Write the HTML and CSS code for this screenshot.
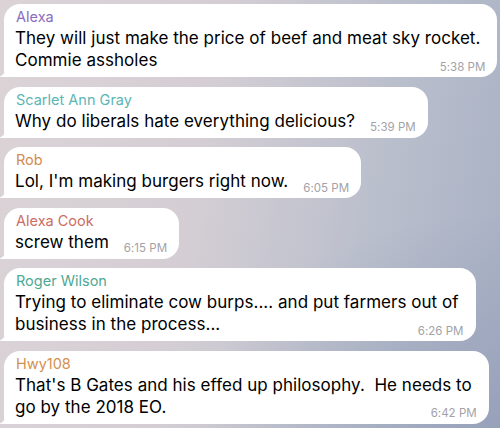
FILE: index.html
```html
<!DOCTYPE html>
<html>
<head>
<meta charset="utf-8">
<link rel="stylesheet" href="styles.css">
</head>
<body>
<div class="chat">
  <div class="bubble multi">
    <div class="name c-purple">Alexa</div>
    <div class="text">They will just make the price of beef and meat sky rocket.<br>Commie assholes<span class="time">5:38 PM</span></div>
    <svg class="tail" viewBox="0 0 14 14" width="14" height="14"><path d="M6 0 V7 C6 10 4 12.5 0 14 H14 V0 Z"/></svg>
  </div>
  <div class="bubble">
    <div class="name c-teal">Scarlet Ann Gray</div>
    <div class="text">Why do liberals hate everything delicious?<span class="time">5:39 PM</span></div>
    <svg class="tail" viewBox="0 0 14 14" width="14" height="14"><path d="M6 0 V7 C6 10 4 12.5 0 14 H14 V0 Z"/></svg>
  </div>
  <div class="bubble">
    <div class="name c-orange">Rob</div>
    <div class="text">Lol, I'm making burgers right now.<span class="time">6:05 PM</span></div>
    <svg class="tail" viewBox="0 0 14 14" width="14" height="14"><path d="M6 0 V7 C6 10 4 12.5 0 14 H14 V0 Z"/></svg>
  </div>
  <div class="bubble">
    <div class="name c-red">Alexa Cook</div>
    <div class="text">screw them<span class="time">6:15 PM</span></div>
    <svg class="tail" viewBox="0 0 14 14" width="14" height="14"><path d="M6 0 V7 C6 10 4 12.5 0 14 H14 V0 Z"/></svg>
  </div>
  <div class="bubble multi">
    <div class="name c-green">Roger Wilson</div>
    <div class="text">Trying to eliminate cow burps.... and put farmers out of<br>business in the process...<span class="time">6:26 PM</span></div>
    <svg class="tail" viewBox="0 0 14 14" width="14" height="14"><path d="M6 0 V7 C6 10 4 12.5 0 14 H14 V0 Z"/></svg>
  </div>
  <div class="bubble multi">
    <div class="name c-orange2">Hwy108</div>
    <div class="text">That's B Gates and his effed up philosophy.&nbsp; He needs to<br>go by the 2018 EO.<span class="time">6:42 PM</span></div>
    <svg class="tail" viewBox="0 0 14 14" width="14" height="14"><path d="M6 0 V7 C6 10 4 12.5 0 14 H14 V0 Z"/></svg>
  </div>
</div>
</body>
</html>
```

FILE: styles.css
```css
html, body {
  margin: 0;
  padding: 0;
}
body {
  width: 500px;
  height: 428px;
  overflow: hidden;
  font-family: Inter, "Noto Sans", "Liberation Sans", sans-serif;
  background:
    radial-gradient(ellipse 60% 50% at 100% 100%, rgba(140,152,180,0.6), rgba(140,152,180,0) 100%),
    linear-gradient(100deg, #dbd3d6 0%, #d4ced4 40%, #b7bdcb 75%, #a7afc3 100%);
}
.chat {
  display: flex;
  flex-direction: column;
  align-items: flex-start;
  gap: 9.5px;
  padding: 4px 0 0 4px;
}
.bubble {
  position: relative;
  background: #fff;
  border-radius: 16px 16px 16px 6px;
  padding: 3px 12px 6px 11px;
}
.bubble.multi {
  padding-right: 17px;
}
.tail {
  position: absolute;
  left: -5px;
  bottom: 0;
  fill: #fff;
}
.name {
  font-size: 14.5px;
  line-height: 20px;
  padding-left: 1px;
}
.c-purple { color: #8b6cc2; }
.c-teal { color: #5db5b4; }
.c-orange { color: #d38b4e; }
.c-red { color: #cd6c5f; }
.c-green { color: #4ea892; }
.c-orange2 { color: #d4904f; }
.text {
  font-size: 17px;
  line-height: 22px;
  color: #000;
  white-space: nowrap;
  letter-spacing: 0.03px;
}
.time {
  float: right;
  font-size: 11.5px;
  line-height: 11px;
  color: #a2a2a8;
  margin: 12.5px -5px -3px 15px;
}
.bubble:not(.multi) .time {
  margin-right: 0;
}
```
